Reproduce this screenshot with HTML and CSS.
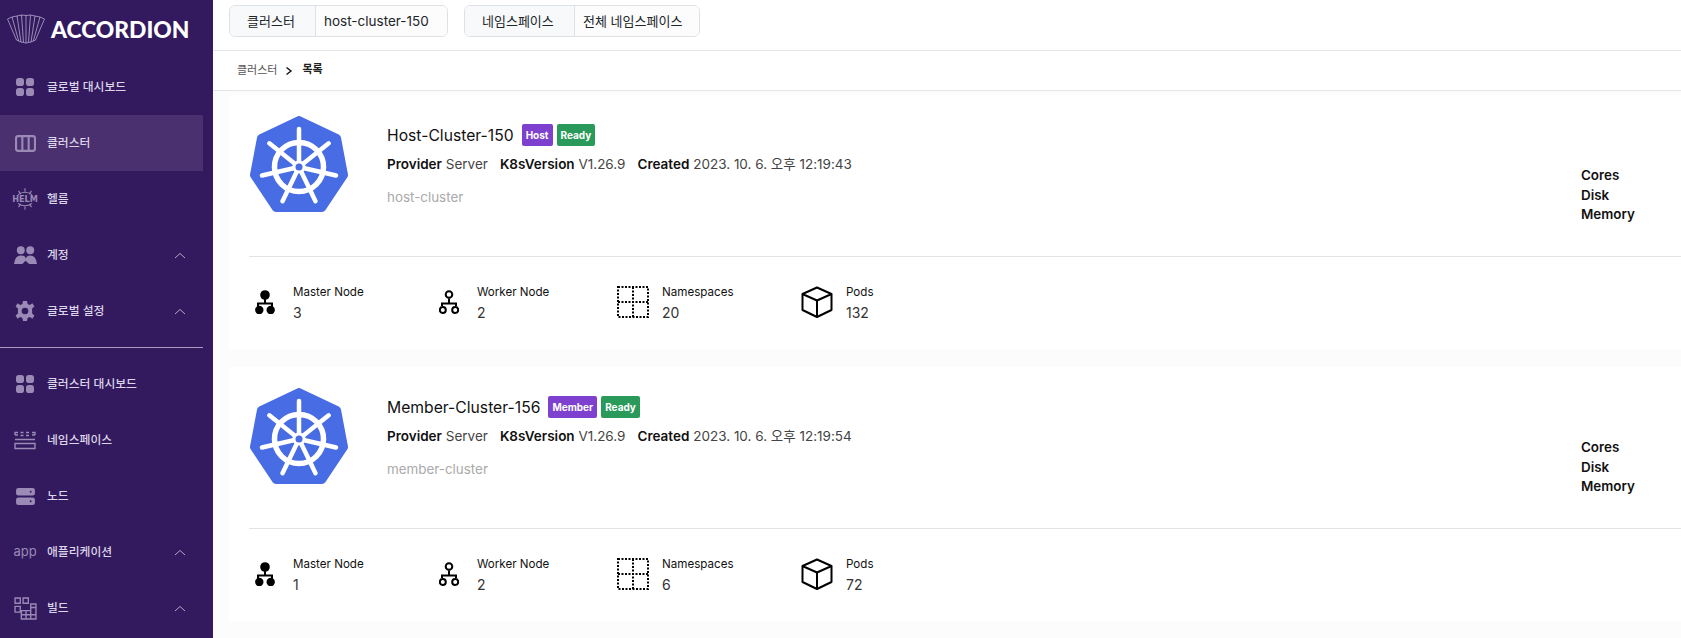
FILE: index.html
```html
<!DOCTYPE html>
<html lang="ko">
<head>
<meta charset="utf-8">
<title>Accordion</title>
<link rel="stylesheet" href="styles.css">
</head>
<body>
<svg class="defs" width="0" height="0">
  <symbol id="k8s" viewBox="0 0 98 97">
    <polygon points="49,4 87,22 94,59 72,92 26,92 4,59 11,22" fill="#476ce3" stroke="#476ce3" stroke-width="8" stroke-linejoin="round"/>
    <g fill="none" stroke="#fff" stroke-linecap="round">
      <circle cx="49" cy="51" r="24.500" stroke-width="5.500"/>
      <g stroke-width="4.500">
        <path d="M49 13V51"/>
        <path d="M49 13V51" transform="rotate(51.430 49 51)"/>
        <path d="M49 13V51" transform="rotate(102.860 49 51)"/>
        <path d="M49 13V51" transform="rotate(154.290 49 51)"/>
        <path d="M49 13V51" transform="rotate(205.710 49 51)"/>
        <path d="M49 13V51" transform="rotate(257.140 49 51)"/>
        <path d="M49 13V51" transform="rotate(308.570 49 51)"/>
      </g>
    </g>
    <circle cx="49" cy="51" r="6.500" fill="#fff"/>
    <circle cx="49" cy="51" r="3.500" fill="#476ce3"/>
  </symbol>
  <symbol id="master" viewBox="0 0 20 24">
    <circle cx="10" cy="5" r="4.800" fill="#000"/>
    <path d="M10 9V13.500M3 17V13.500H17V17" fill="none" stroke="#000" stroke-width="2"/>
    <circle cx="4.300" cy="20" r="4.200" fill="#000"/>
    <circle cx="15.700" cy="20" r="4.200" fill="#000"/>
  </symbol>
  <symbol id="worker" viewBox="0 0 20 24">
    <circle cx="10" cy="4.500" r="3.300" fill="none" stroke="#000" stroke-width="2"/>
    <path d="M10 8.500V13.500M3 16V13.500H17V16" fill="none" stroke="#000" stroke-width="2"/>
    <circle cx="3.800" cy="20" r="3" fill="none" stroke="#000" stroke-width="2"/>
    <circle cx="16.200" cy="20" r="3" fill="none" stroke="#000" stroke-width="2"/>
  </symbol>
  <symbol id="ns" viewBox="0 0 32 32">
    <path d="M1 1H31V31H1ZM16 1V31M1 16H31" fill="none" stroke="#000" stroke-width="2" stroke-dasharray="2 1.500"/>
  </symbol>
  <symbol id="pod" viewBox="0 0 32 32">
    <path d="M16 1.500 30.500 8V24L16 31 1.500 24V8ZM1.500 8 16 14.500 30.500 8M16 14.500V31" fill="none" stroke="#000" stroke-width="2" stroke-linejoin="round"/>
  </symbol>
  <symbol id="grid4" viewBox="0 0 18 18">
    <rect x="0" y="0" width="8" height="8" rx="2.800"/><rect x="10" y="0" width="8" height="8" rx="2.800"/>
    <rect x="0" y="10" width="8" height="8" rx="2.800"/><rect x="10" y="10" width="8" height="8" rx="2.800"/>
  </symbol>
  <symbol id="chev" viewBox="0 0 12 7">
    <path d="M1 6 6 1.500 11 6" fill="none" stroke="currentColor" stroke-width="1"/>
  </symbol>
</svg>

<div class="app">
  <aside class="sidebar">
    <div class="logo">
      <svg class="logo-mark" viewBox="0 0 38 30" fill="none" stroke="#b5a8ca" stroke-width="0.800" stroke-linejoin="round">
        <path d="M.5 5 5 3 10 2 14.500 1 19 1.500 23.500 1 28 2 33 3 37.500 5 28.500 26 26.300 27 24 28 21.500 28.500 19 29 16.500 28.500 14 28 11.700 27 9.500 26Z"/>
        <path d="M5 3 11.700 27M10 2 14 28M14.500 1 16.500 28.500M19 1.500V29M23.500 1 21.500 28.500M28 2 24 28M33 3 26.300 27"/>
      </svg>
      <span class="logo-text">ACCORDION</span>
    </div>
    <nav class="menu">
      <a class="item"><span class="ico"><svg class="i-grid"><use href="#grid4"/></svg></span><span class="label">글로벌 대시보드</span></a>
      <a class="item active"><span class="ico"><svg class="i-wide" viewBox="0 0 20 16" fill="none" stroke="currentColor" stroke-width="2"><rect x="1" y="1" width="18" height="14" rx="2"/><path d="M7 1V15M13 1V15"/></svg></span><span class="label">클러스터</span></a>
      <a class="item"><span class="ico"><svg class="i-helm" viewBox="0 0 24 24" fill="none" stroke="currentColor" stroke-width="1"><path d="M6 4.500 8 7.500M18 4.500 16 7.500M12 2V5M5.500 8Q12 3.500 18.500 8M6 19.500 8 16.500M18 19.500 16 16.500M12 22V19M5.500 16Q12 20.500 18.500 16"/><text x="12" y="14.800" text-anchor="middle" class="helm-t">HELM</text></svg></span><span class="label">헬름</span></a>
      <a class="item"><span class="ico"><svg class="i-user" viewBox="0 0 22 17" fill="currentColor"><circle cx="6.500" cy="4" r="3.800"/><circle cx="15.500" cy="4" r="3.800"/><path d="M0 17Q1 9 6.500 9T11 12.500Q12 9 15.500 9 21 9 22 17H14.500L11 14 8 17Z"/></svg></span><span class="label">계정</span><svg class="chev"><use href="#chev"/></svg></a>
      <a class="item"><span class="ico"><svg class="i-gear" viewBox="0 0 20 20" fill="currentColor"><path fill-rule="evenodd" d="M8 0H12L12.600 3 14.800 4 17.400 2.300 19.400 5.600 17.100 7.500V12.500L19.400 14.400 17.400 17.700 14.800 16 12.600 17 12 20H8L7.400 17 5.200 16 2.600 17.700 .6 14.400 2.900 12.500V7.500L.6 5.600 2.600 2.300 5.200 4 7.400 3ZM10 6.700A3.300 3.300 0 1 0 10 13.300 3.300 3.300 0 1 0 10 6.700Z"/></svg></span><span class="label">글로벌 설정</span><svg class="chev"><use href="#chev"/></svg></a>
      <div class="divider"></div>
      <a class="item"><span class="ico"><svg class="i-grid"><use href="#grid4"/></svg></span><span class="label">클러스터 대시보드</span></a>
      <a class="item"><span class="ico"><svg class="i-ns" viewBox="0 0 22 18" fill="none" stroke="currentColor" stroke-width="1.400"><path d="M1 3.500V1H4M6.500 1H9.500M12 1H15M18 1H21V3.500M1 3.500H4M6.500 4H9.500M12 4H15M18 3.500H21"/><path d="M1 8H21M1 12H21V17H1Z"/></svg></span><span class="label">네임스페이스</span></a>
      <a class="item"><span class="ico"><svg class="i-wide" viewBox="0 0 20 18"><rect x="0" y="0" width="20" height="8" rx="2.500" fill="currentColor"/><rect x="0" y="10" width="20" height="8" rx="2.500" fill="currentColor"/><circle cx="15.500" cy="4" r="1" fill="#331a5f"/><circle cx="15.500" cy="14" r="1" fill="#331a5f"/></svg></span><span class="label">노드</span></a>
      <a class="item"><span class="ico ico-text">app</span><span class="label">애플리케이션</span><svg class="chev"><use href="#chev"/></svg></a>
      <a class="item"><span class="ico"><svg class="i-build" viewBox="0 0 22 22" fill="none" stroke="currentColor" stroke-width="1.300"><path d="M1 1H6V6H1ZM8.700 1H13.700V6H8.700ZM1 9H6V14.500H1Z"/><path d="M16 6.700H21V21H7V13H16ZM11.500 13V21M16 13V21M7 17H21M16 10H21"/></svg></span><span class="label">빌드</span><svg class="chev"><use href="#chev"/></svg></a>
    </nav>
  </aside>

  <main class="main">
    <header class="topbar">
      <div class="select"><span class="sel-label sel-l1">클러스터</span><span class="sel-value sel-v1">host-cluster-150</span></div>
      <div class="select"><span class="sel-label sel-l2">네임스페이스</span><span class="sel-value sel-v2">전체 네임스페이스</span></div>
    </header>
    <div class="crumbs">
      <span class="crumb">클러스터</span>
      <svg class="crumb-sep" viewBox="0 0 8 10"><path d="M1.500 1.500 6 5 1.500 8.500" fill="none" stroke="#111" stroke-width="1.400"/></svg>
      <b class="crumb-cur">목록</b>
    </div>
    <div class="content">
      <section class="card">
        <div class="card-top">
          <svg class="k8s"><use href="#k8s"/></svg>
          <div class="info">
            <div class="title"><span class="name">Host-Cluster-150</span><span class="badge purple">Host</span><span class="badge green">Ready</span></div>
            <div class="meta"><b>Provider</b> <span class="v">Server</span><b>K8sVersion</b> <span class="v">V1.26.9</span><b>Created</b> <span class="v">2023. 10. 6. 오후 12:19:43</span></div>
            <div class="desc">host-cluster</div>
          </div>
          <div class="res"><b>Cores</b><b>Disk</b><b>Memory</b></div>
        </div>
        <div class="stats">
          <div class="stat"><svg class="st-ico st-m"><use href="#master"/></svg><div><div class="st-l">Master Node</div><div class="st-v">3</div></div></div>
          <div class="stat"><svg class="st-ico st-m"><use href="#worker"/></svg><div><div class="st-l">Worker Node</div><div class="st-v">2</div></div></div>
          <div class="stat"><svg class="st-ico st-b"><use href="#ns"/></svg><div><div class="st-l">Namespaces</div><div class="st-v">20</div></div></div>
          <div class="stat"><svg class="st-ico st-b"><use href="#pod"/></svg><div><div class="st-l">Pods</div><div class="st-v">132</div></div></div>
        </div>
      </section>
      <section class="card">
        <div class="card-top">
          <svg class="k8s"><use href="#k8s"/></svg>
          <div class="info">
            <div class="title"><span class="name">Member-Cluster-156</span><span class="badge purple">Member</span><span class="badge green">Ready</span></div>
            <div class="meta"><b>Provider</b> <span class="v">Server</span><b>K8sVersion</b> <span class="v">V1.26.9</span><b>Created</b> <span class="v">2023. 10. 6. 오후 12:19:54</span></div>
            <div class="desc">member-cluster</div>
          </div>
          <div class="res"><b>Cores</b><b>Disk</b><b>Memory</b></div>
        </div>
        <div class="stats">
          <div class="stat"><svg class="st-ico st-m"><use href="#master"/></svg><div><div class="st-l">Master Node</div><div class="st-v">1</div></div></div>
          <div class="stat"><svg class="st-ico st-m"><use href="#worker"/></svg><div><div class="st-l">Worker Node</div><div class="st-v">2</div></div></div>
          <div class="stat"><svg class="st-ico st-b"><use href="#ns"/></svg><div><div class="st-l">Namespaces</div><div class="st-v">6</div></div></div>
          <div class="stat"><svg class="st-ico st-b"><use href="#pod"/></svg><div><div class="st-l">Pods</div><div class="st-v">72</div></div></div>
        </div>
      </section>
    </div>
  </main>
</div>
</body>
</html>
```
FILE: styles.css
```css
* { box-sizing: border-box; }
html, body { margin: 0; height: 100%; overflow: hidden; }
body { font-family: Inter, "Noto Sans CJK KR", sans-serif; color: #111; background: #fff; }
.defs { position: absolute; }
.app { display: flex; height: 638px; width: 1681px; overflow: hidden; }

.sidebar { width: 213px; flex: none; background: #331a5f; color: #a99bc0; }
.logo { height: 55px; display: flex; align-items: center; padding: 0 0 0 7px; gap: 6px; margin-top: 1px; }
.logo-mark { width: 38px; height: 30px; }
.logo-text { font-family: Lato, sans-serif; font-weight: 900; font-size: 22.800px; color: #fff; }
.menu { padding-top: 3px; width: 203px; }
.item { height: 56px; display: flex; align-items: center; font-size: 11.800px; font-weight: 500; color: #dcd5e8; }
.item.active { background: #4a306f; }
.ico { width: 47px; flex: none; display: flex; justify-content: center; padding-left: 3px; color: #9a8ab5; }
.i-grid { width: 18px; height: 18px; fill: currentColor; }
.i-wide { width: 21px; height: 17px; }
.i-user { width: 23px; height: 18px; }
.i-helm { width: 26px; height: 26px; }
.i-gear { width: 20px; height: 20px; }
.i-ns { width: 22px; height: 19px; }
.i-build { width: 23px; height: 23px; }
.helm-t { font: 700 7.500px "DejaVu Sans", sans-serif; fill: currentColor; stroke: none; }
.ico-text { font-size: 13px; font-weight: 400; padding-bottom: 2px; }
.label { flex: 1; padding-bottom: 3px; }
.chev { width: 12px; height: 7px; margin-right: 17px; color: #b3a6c8; }
.divider { height: 1px; background: #a99bc0; margin: 8px 0 0; }
.divider + .item { margin-top: 8px; }

.main { flex: 1; min-width: 0; display: flex; flex-direction: column; background: #fff; }
.topbar { height: 51px; flex: none; border-bottom: 1px solid #e5e5e5; display: flex; gap: 16px; padding: 5px 0 0 16px; align-items: flex-start; }
.select { display: flex; height: 32px; border: 1px solid #dee2e6; border-radius: 6px; font-size: 13px; line-height: 30px; color: #212529; overflow: hidden; }
.sel-label { background: #f8f9fa; padding-left: 17px; border-right: 1px solid #dee2e6; }
.sel-value { background: #fcfcfd; padding-left: 8px; }
.sel-l1 { width: 86px; }
.sel-v1 { width: 131px; font-size: 13.500px; }
.sel-l2 { width: 110px; }
.sel-v2 { width: 124px; }
.crumbs { height: 40px; flex: none; border-bottom: 1px solid #e5e5e5; display: flex; align-items: center; padding: 0 0 4px 24px; font-size: 11px; }
.crumb { color: #555; }
.crumb-sep { width: 8px; height: 10px; margin: 4px 9px 0 8px; }
.crumb-cur { font-weight: 700; color: #222; padding-bottom: 1px; }

.content { flex: 1; background: #fcfcfc; padding: 4px 0 0 16px; overflow: hidden; }
.card { background: #fff; height: 255px; width: 1500px; padding: 0 0 0 20px; margin-bottom: 17px; }
.card-top { height: 162px; border-bottom: 1px solid #e3e3e3; display: flex; position: relative; }
.k8s { width: 98px; height: 97px; margin: 21px 0 0 1px; flex: none; overflow: visible; }
.info { margin-left: 39px; padding-top: 29px; }
.title { display: flex; align-items: center; height: 22px; }
.name { font-size: 15.700px; color: #111; margin-right: 8px; }
.badge { font-size: 10px; font-weight: 700; color: #fff; height: 22px; line-height: 22px; padding: 0 4px; border-radius: 2px; margin-right: 4px; }
.purple { background: #7d40cf; }
.green { background: #2a9a5a; }
.meta { font-size: 13.500px; margin-top: 10px; color: #444; white-space: nowrap; line-height: 17px; }
.meta b { color: #111; font-weight: 600; }
.v { margin-right: 12px; }
.desc { font-size: 13.400px; line-height: 16px; color: #aaa; margin-top: 16px; }
.res { position: absolute; left: 1332px; top: 71px; display: flex; flex-direction: column; font-size: 13.400px; line-height: 19.500px; }
.res b { font-weight: 600; color: #111; }

.stats { display: flex; padding: 27px 0 0 4px; }
.stat { display: flex; width: 184px; }
.stat:nth-child(2) { width: 180px; }
.st-ico { flex: none; overflow: visible; }
.st-m { width: 20px; height: 24px; margin: 6px 18px 0 2px; }
.st-b { width: 32px; height: 32px; margin: 2px 13px 0 0; }
.st-l { font-size: 11.600px; line-height: 14px; margin-top: 1px; color: #111; }
.st-v { font-size: 14px; line-height: 17px; margin-top: 5px; color: #333; }
```
